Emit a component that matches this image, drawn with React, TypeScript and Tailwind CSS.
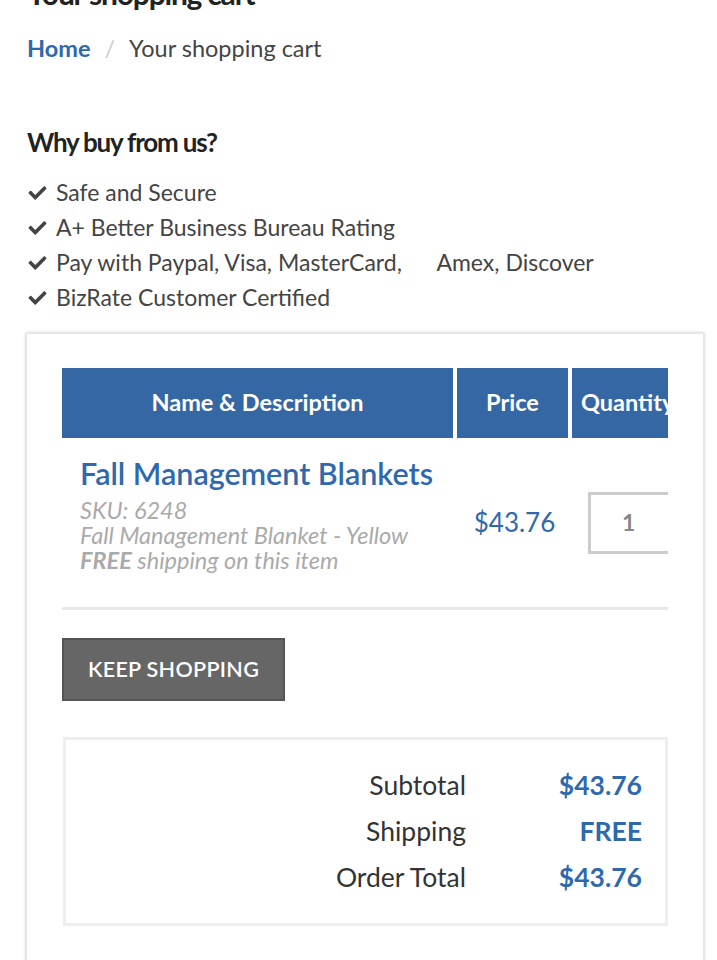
import React from 'react';
import { FaCheck } from 'react-icons/fa';

const REASONS = [
  'Safe and Secure',
  'A+ Better Business Bureau Rating',
  'Pay with Paypal, Visa, MasterCard,\u00a0\u00a0\u00a0\u00a0\u00a0 Amex, Discover',
  'BizRate Customer Certified',
];

const TOTALS = [
  { label: 'Subtotal', value: '$43.76' },
  { label: 'Shipping', value: 'FREE' },
  { label: 'Order Total', value: '$43.76' },
];

export default function App() {
  return (
    <div className="w-[717px] h-[960px] overflow-hidden bg-white font-['Lato',sans-serif] text-[#444]">
      <div className="px-[27px] -mt-[27px]">
        <h1 className="text-[30px] font-bold leading-[40px] tracking-[-1.2px] text-[#222]">Your shopping cart</h1>

        {/* Breadcrumb */}
        <div className="mt-[20px] flex items-center text-[23.5px] leading-[30px]">
          <a className="font-bold text-[#2f69ad]">Home</a>
          <span className="mx-[14px] text-[#ccc]">/</span>
          <span className="text-[#444]">Your shopping cart</span>
        </div>

        <h2 className="mt-[62px] text-[26px] font-bold leading-[34px] tracking-[-1.2px] text-[#222]">Why buy from us?</h2>

        <ul className="mt-[16px]">
          {REASONS.map((r) => (
            <li key={r} className="flex items-center h-[35px] text-[23px] whitespace-pre">
              <FaCheck className="w-[21px] h-[18px] mr-[8px] text-[#444]" />
              {r}
            </li>
          ))}
        </ul>
      </div>

      {/* Cart card */}
      <div className="mt-[18px] ml-[26px] w-[678px] border border-[#e6e6e6] shadow-[0_0_3px_rgba(0,0,0,0.25)] px-[35px] pt-[34px] pb-[60px]">
        <div className="w-[606px] overflow-hidden">
          <div className="w-[760px]">
            <div className="flex h-[70px] text-white text-[23.5px] font-bold">
              <div className="w-[395px] shrink-0 border-r-4 border-white bg-[#3567a5] flex items-center justify-center">Name &amp; Description</div>
              <div className="w-[115px] shrink-0 border-r-4 border-white bg-[#3567a5] flex items-center justify-center">Price</div>
              <div className="flex-1 bg-[#3567a5] flex items-center pl-[9px]">Quantity</div>
            </div>

            <div className="flex h-[172px] border-b-[3px] border-[#e8e8e8]">
              <div className="w-[395px] shrink-0 pl-[18px] pt-[16px]">
                <div className="text-[30.5px] font-semibold leading-[38px] text-[#2f69ad] whitespace-nowrap">Fall Management Blankets</div>
                <div className="mt-[6px] italic text-[23.5px] leading-[25px] text-[#aaa] whitespace-nowrap">
                  <div>SKU: 6248</div>
                  <div>Fall Management Blanket - Yellow</div>
                  <div><span className="font-bold">FREE</span> shipping on this item</div>
                </div>
              </div>
              <div className="w-[115px] shrink-0 flex items-center justify-center text-[26px] text-[#2f69ad]">$43.76</div>
              <div className="flex-1 flex items-center pl-[16px]">
                <div className="w-[100px] h-[62px] border-[3px] border-[#ccc] flex items-center pl-[31px] text-[23px] font-bold text-[#888]">1</div>
              </div>
            </div>
          </div>
        </div>

        <button className="mt-[28px] h-[63px] w-[223px] bg-[#666] border-2 border-[#555] text-white text-[21.5px] font-semibold tracking-[0.3px]">KEEP SHOPPING</button>

        <div className="mt-[36px] w-[605px] ml-[1px] border-[3px] border-[#eee] pt-[23px] pb-[22px]">
          {TOTALS.map((t) => (
            <div key={t.label} className="flex h-[46px] items-center text-[26.5px]">
              <div className="w-[400px] text-right text-[#333]">{t.label}</div>
              <div className="w-[176px] text-right font-bold text-[#2f69ad]">{t.value}</div>
            </div>
          ))}
        </div>
      </div>
    </div>
  );
}
